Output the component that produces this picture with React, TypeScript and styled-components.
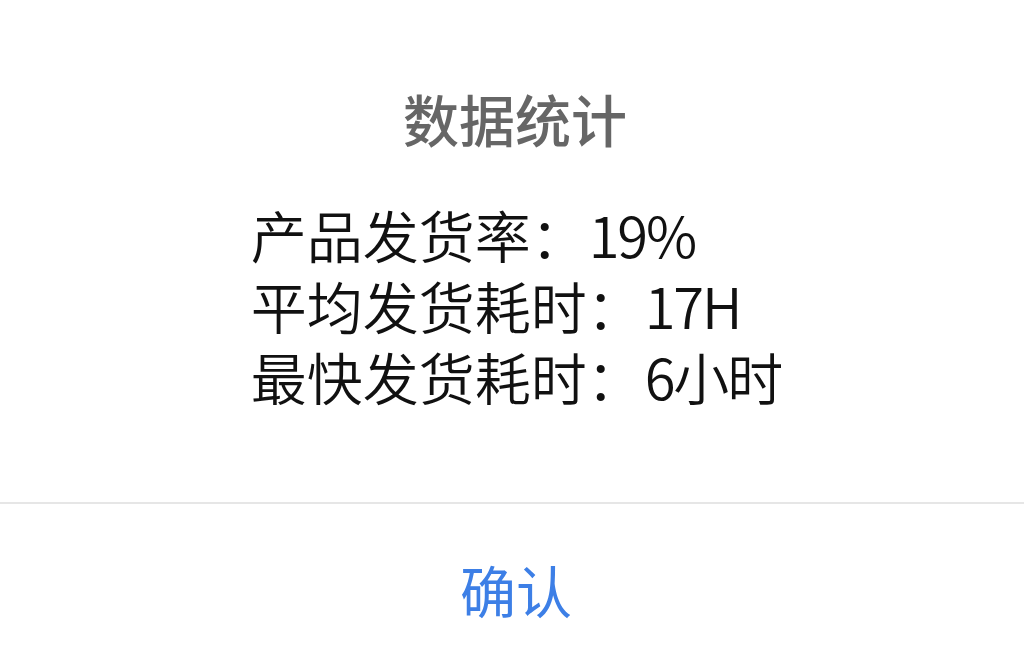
import React from "react";
import styled, { createGlobalStyle } from "styled-components";

const Global = createGlobalStyle`
  html, body { margin: 0; padding: 0; background: #ffffff; }
  body { font-family: "Noto Sans CJK SC", "Noto Sans", sans-serif; }
`;

const Dialog = styled.div`
  width: 1024px;
  height: 651px;
  display: flex;
  flex-direction: column;
  background: #ffffff;
  overflow: hidden;
`;

const Body = styled.div`
  height: 502px;
  display: flex;
  flex-direction: column;
  align-items: center;
  padding-top: 90px;
  box-sizing: border-box;
`;

const Title = styled.h1`
  margin: 0;
  font-size: 56px;
  line-height: 56px;
  font-weight: 500;
  color: #666666;
  padding-left: 6px;
`;

const Stats = styled.div`
  margin-top: 52px;
  display: flex;
  flex-direction: column;
  align-items: flex-start;
  padding-left: 8px;
`;

const Line = styled.div`
  font-size: 56px;
  line-height: 71px;
  font-weight: 350;
  color: #111111;
  white-space: nowrap;
`;

const Value = styled.span`
  letter-spacing: -2px;
  margin-left: 2px;
`;

const Divider = styled.div`
  height: 2px;
  background: #e6e6e6;
`;

const Confirm = styled.button`
  flex: 1;
  border: none;
  background: transparent;
  font-family: inherit;
  font-size: 56px;
  font-weight: 400;
  color: #3d7fe6;
  padding: 22px 0 0 8px;
  cursor: pointer;
`;

const stats = [
  { label: "产品发货率", value: "19%" },
  { label: "平均发货耗时", value: "17H" },
  { label: "最快发货耗时", value: "6小时" },
];

export default function App() {
  return (
    <>
      <Global />
      <Dialog>
        <Body>
          <Title>数据统计</Title>
          <Stats>
            {stats.map((s) => (
              <Line key={s.label}>
                {s.label}：<Value>{s.value}</Value>
              </Line>
            ))}
          </Stats>
        </Body>
        <Divider />
        <Confirm>确认</Confirm>
      </Dialog>
    </>
  );
}
